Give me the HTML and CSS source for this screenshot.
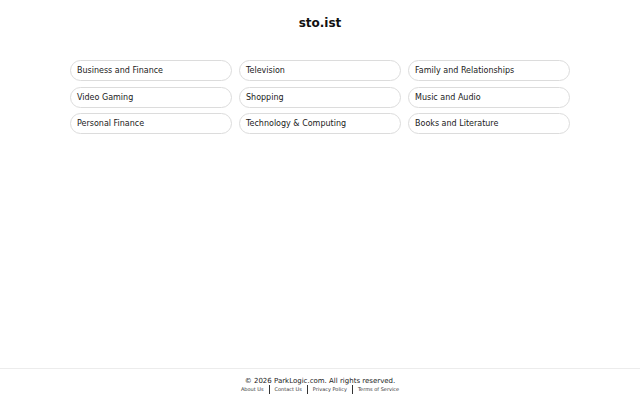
FILE: index.html
```html
<!DOCTYPE html>
<html>
<head>
<meta charset="utf-8">
<link rel="stylesheet" href="styles.css">
</head>
<body>
<div class="page">
  <header class="header"><h1 class="title">sto.ist</h1></header>
  <main class="main">
    <div class="grid">
      <a class="pill">Business and Finance</a>
      <a class="pill">Television</a>
      <a class="pill">Family and Relationships</a>
      <a class="pill">Video Gaming</a>
      <a class="pill">Shopping</a>
      <a class="pill">Music and Audio</a>
      <a class="pill">Personal Finance</a>
      <a class="pill">Technology &amp; Computing</a>
      <a class="pill">Books and Literature</a>
    </div>
  </main>
  <footer class="footer">
    <div class="copy">© 2026 ParkLogic.com. All rights reserved.</div>
    <nav class="links">
      <a class="link">About Us</a>
      <a class="link">Contact Us</a>
      <a class="link">Privacy Policy</a>
      <a class="link">Terms of Service</a>
    </nav>
  </footer>
</div>
</body>
</html>
```
FILE: styles.css
```css
html, body {
  margin: 0;
  padding: 0;
  background: #ffffff;
}
body {
  font-family: "DejaVu Sans", sans-serif;
  color: #222;
}
.page {
  display: flex;
  flex-direction: column;
  min-height: 400px;
}
.header {
  padding-top: 15px;
  display: flex;
  justify-content: center;
}
.title {
  margin: 0;
  font-size: 12px;
  line-height: 16px;
  font-weight: bold;
  color: #111;
}
.main {
  flex: 1;
  padding-top: 29px;
  display: flex;
  justify-content: center;
}
.grid {
  display: grid;
  grid-template-columns: repeat(3, 162px);
  column-gap: 7px;
  row-gap: 5.5px;
  align-content: start;
}
.pill {
  display: flex;
  align-items: center;
  box-sizing: border-box;
  height: 21px;
  padding: 0 6px;
  border: 1px solid #dcdcdc;
  border-radius: 11px;
  font-size: 8px;
  color: #1a1a1a;
  white-space: nowrap;
}
.footer {
  border-top: 1px solid #ececec;
  height: 32px;
  box-sizing: border-box;
  padding-top: 8px;
  display: flex;
  flex-direction: column;
  align-items: center;
}
.copy {
  font-size: 7px;
  line-height: 9px;
  color: #222;
}
.links {
  display: flex;
  align-items: center;
  margin-top: -1px;
}
.link {
  font-size: 5px;
  line-height: 9px;
  color: #333;
  padding: 0 5px;
  border-left: 1px solid #333;
}
.link:first-child {
  border-left: none;
}
```
